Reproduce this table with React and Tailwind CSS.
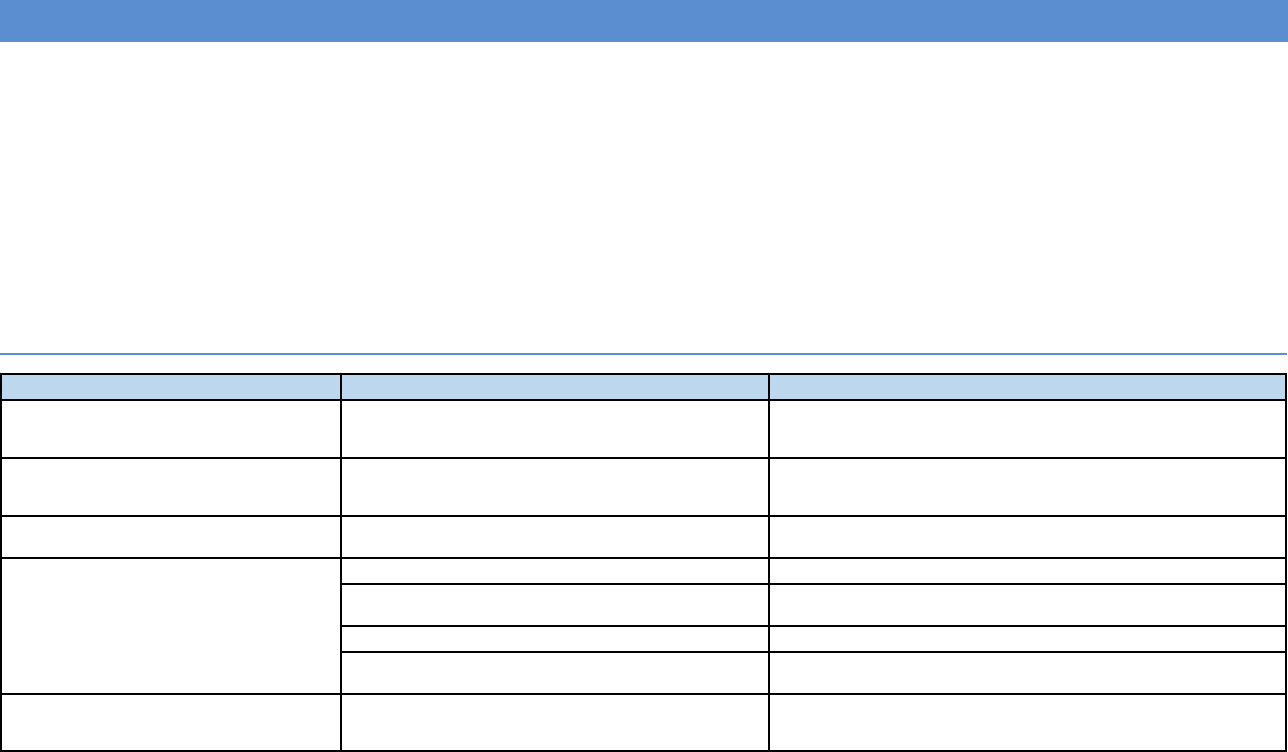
const rows = [
  { h: "h-[58px]" },
  { h: "h-[58px]" },
  { h: "h-[42px]" },
];

const groupRows = ["h-[26px]", "h-[42px]", "h-[26px]", "h-[42px]"];

const cell = "border-2 border-black p-0";

export default function App() {
  return (
    <div className="min-h-screen bg-white font-['Liberation_Sans',sans-serif]">
      <div className="h-[42px] w-full bg-[#5b8dd1]" />
      <div className="mt-[311px] h-[2px] w-[1287px] bg-[#5b8dd1]" />
      <table className="mt-[18px] w-[1287px] table-fixed border-collapse">
        <colgroup>
          <col className="w-[340px]" />
          <col className="w-[428px]" />
          <col />
        </colgroup>
        <thead>
          <tr className="h-[26px] bg-[#bdd7ee]">
            <th className={cell} />
            <th className={cell} />
            <th className={cell} />
          </tr>
        </thead>
        <tbody>
          {rows.map((r, i) => (
            <tr key={i} className={r.h}>
              <td className={cell} />
              <td className={cell} />
              <td className={cell} />
            </tr>
          ))}
          {groupRows.map((h, i) => (
            <tr key={"g" + i} className={h}>
              {i === 0 && <td className={cell} rowSpan={4} />}
              <td className={cell} />
              <td className={cell} />
            </tr>
          ))}
          <tr className="h-[57px]">
            <td className={cell} />
            <td className={cell} />
            <td className={cell} />
          </tr>
        </tbody>
      </table>
    </div>
  );
}
